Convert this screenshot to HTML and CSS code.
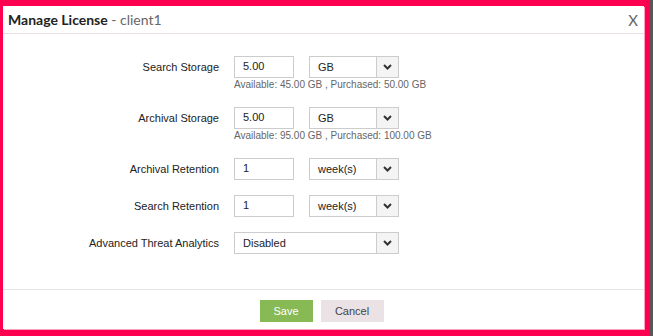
FILE: index.html
```html
<!DOCTYPE html>
<html lang="en">
<head>
    <meta charset="UTF-8">
    <meta name="viewport" content="width=device-width, initial-scale=1.0">
    <title>Manage License</title>
    <link rel="stylesheet" href="styles.css">
</head>
<body>

<div class="frame">
    <div class="dialog">
        <div class="dialog-head">
            <h2 class="title">Manage License <span class="sub">- client1</span></h2>
            <span class="close">X</span>
        </div>

        <div class="dialog-body">
            <div class="row">
                <label class="label">Search Storage</label>
                <div class="field">
                    <div class="controls">
                        <div class="input">5.00</div>
                        <div class="select">
                            <span class="value">GB</span>
                            <span class="arrow"><svg width="9" height="6" viewBox="0 0 9 6"><path d="M1 1l3.5 3.5L8 1" fill="none" stroke="#333" stroke-width="2"/></svg></span>
                        </div>
                    </div>
                    <div class="help">Available: 45.00 GB , Purchased: 50.00 GB</div>
                </div>
            </div>

            <div class="row">
                <label class="label">Archival Storage</label>
                <div class="field">
                    <div class="controls">
                        <div class="input">5.00</div>
                        <div class="select">
                            <span class="value">GB</span>
                            <span class="arrow"><svg width="9" height="6" viewBox="0 0 9 6"><path d="M1 1l3.5 3.5L8 1" fill="none" stroke="#333" stroke-width="2"/></svg></span>
                        </div>
                    </div>
                    <div class="help">Available: 95.00 GB , Purchased: 100.00 GB</div>
                </div>
            </div>

            <div class="row">
                <label class="label">Archival Retention</label>
                <div class="field">
                    <div class="controls">
                        <div class="input">1</div>
                        <div class="select">
                            <span class="value">week(s)</span>
                            <span class="arrow"><svg width="9" height="6" viewBox="0 0 9 6"><path d="M1 1l3.5 3.5L8 1" fill="none" stroke="#333" stroke-width="2"/></svg></span>
                        </div>
                    </div>
                </div>
            </div>

            <div class="row">
                <label class="label">Search Retention</label>
                <div class="field">
                    <div class="controls">
                        <div class="input">1</div>
                        <div class="select">
                            <span class="value">week(s)</span>
                            <span class="arrow"><svg width="9" height="6" viewBox="0 0 9 6"><path d="M1 1l3.5 3.5L8 1" fill="none" stroke="#333" stroke-width="2"/></svg></span>
                        </div>
                    </div>
                </div>
            </div>

            <div class="row">
                <label class="label">Advanced Threat Analytics</label>
                <div class="field">
                    <div class="controls">
                        <div class="select wide">
                            <span class="value">Disabled</span>
                            <span class="arrow"><svg width="9" height="6" viewBox="0 0 9 6"><path d="M1 1l3.5 3.5L8 1" fill="none" stroke="#333" stroke-width="2"/></svg></span>
                        </div>
                    </div>
                </div>
            </div>
        </div>

        <div class="dialog-foot">
            <button class="btn save">Save</button>
            <button class="btn cancel">Cancel</button>
        </div>
    </div>
</div>

</body>
</html>
```

FILE: styles.css
```css
body {
    margin: 0;
    background-color: #585858;
    font-family: "Liberation Sans", Arial, sans-serif;
    font-size: 11px;
    color: #222;
}
.frame {
    width: 650px;
    height: 336px;
    box-sizing: border-box;
    padding: 6px 6px 7px 3px;
    background-color: #ff0050;
}
.dialog {
    height: 100%;
    display: flex;
    flex-direction: column;
    background-color: #ffffff;
    box-shadow: 1px 1px 0 #f7a3bb;
}
.dialog-head {
    height: 27px;
    display: flex;
    align-items: center;
    justify-content: space-between;
    padding: 0 6px 0 5px;
    border-bottom: 1px solid #e8dfe2;
}
.title {
    margin: 0;
    font-family: Lato, sans-serif;
    font-size: 14px;
    font-weight: bold;
    color: #222;
}
.title .sub {
    font-weight: normal;
    color: #666;
}
.close {
    font-family: Lato, sans-serif;
    font-size: 15px;
    color: #666;
}
.dialog-body {
    flex: 1;
    padding-top: 22px;
    display: flex;
    flex-direction: column;
    gap: 15px;
}
.row {
    display: grid;
    grid-template-columns: 216px 1fr;
    column-gap: 15px;
    align-items: start;
}
.label {
    text-align: right;
    line-height: 22px;
    color: #222;
}
.controls {
    display: flex;
    gap: 15px;
}
.input {
    width: 60px;
    height: 22px;
    box-sizing: border-box;
    border: 1px solid #ccc;
    padding-left: 8px;
    line-height: 19px;
}
.select {
    width: 90px;
    height: 22px;
    box-sizing: border-box;
    border: 1px solid #ccc;
    display: flex;
}
.select.wide {
    width: 165px;
}
.select .value {
    flex: 1;
    padding-left: 8px;
    line-height: 20px;
}
.select .arrow {
    width: 21px;
    border-left: 1px solid #ccc;
    background-color: #f4f4f4;
    display: flex;
    align-items: center;
    justify-content: center;
}
.help {
    font-size: 10px;
    line-height: 14px;
    color: #666;
}
.dialog-foot {
    border-top: 1px solid #e5e5e5;
    padding: 10px 4px 7px 0;
    display: flex;
    justify-content: center;
    gap: 8px;
}
.btn {
    height: 22px;
    border: none;
    font-family: "Liberation Sans", Arial, sans-serif;
    font-size: 11px;
    padding: 0;
}
.save {
    width: 53px;
    background-color: #87b954;
    color: #fff;
}
.cancel {
    width: 63px;
    background-color: #ebe2e5;
    color: #444;
}
```
